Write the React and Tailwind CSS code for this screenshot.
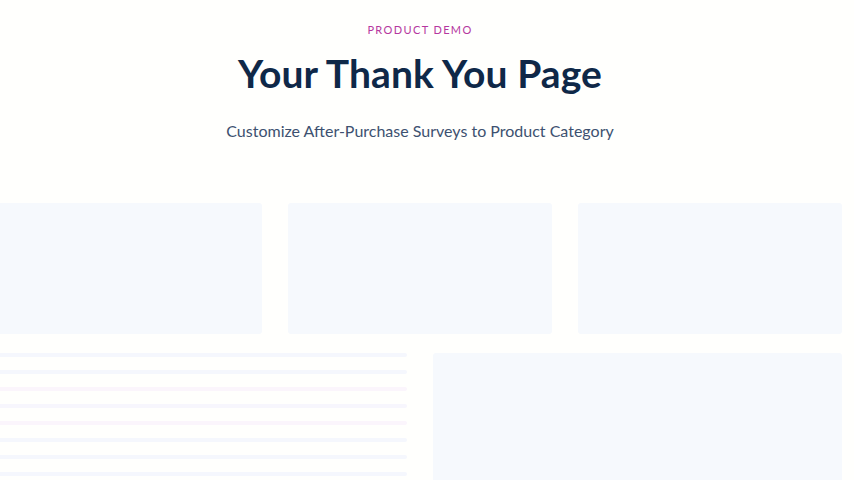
import React from 'react';

const lines = [
  'bg-[#f5f7fd]',
  'bg-[#f5f7fd]',
  'bg-[#fbf5fc]',
  'bg-[#f7f6fd]',
  'bg-[#fbf5fc]',
  'bg-[#f5f7fd]',
  'bg-[#f5f7fd]',
  'bg-[#f5f7fd]',
];

const App = () => {
  return (
    <div className="h-[480px] bg-[#fffffd] overflow-hidden font-['Lato',sans-serif]">
      <div className="w-[844px] ml-[-2px]">
        <header className="pt-[23px] flex flex-col items-center text-center">
          <p className="text-[11px] leading-[14px] tracking-[0.125em] text-[#b5379f] uppercase">Product Demo</p>
          <h1 className="mt-[13px] text-[39px] leading-[46px] font-bold tracking-[0.1px] text-[#0f2848]">
            Your Thank You Page
          </h1>
          <p className="mt-[25px] text-[16px] leading-[20px] text-[#3d5170]">
            Customize After-Purchase Surveys to Product Category
          </p>
        </header>

        <div className="mt-[62px] grid grid-cols-3 gap-[26px]">
          <div className="h-[131px] rounded-[3px] bg-[#f6f9fd]"></div>
          <div className="h-[131px] rounded-[3px] bg-[#f6f9fd]"></div>
          <div className="h-[131px] rounded-[3px] bg-[#f6f9fd]"></div>
        </div>

        <div className="mt-[19px] grid grid-cols-2 gap-[26px]">
          <div className="flex flex-col gap-[13px]">
            {lines.map((c, i) => (
              <div key={i} className={`h-[4px] rounded-r-full ${c}`}></div>
            ))}
          </div>
          <div className="h-[200px] rounded-[3px] bg-[#f6f9fd]"></div>
        </div>
      </div>
    </div>
  );
};

export default App;
